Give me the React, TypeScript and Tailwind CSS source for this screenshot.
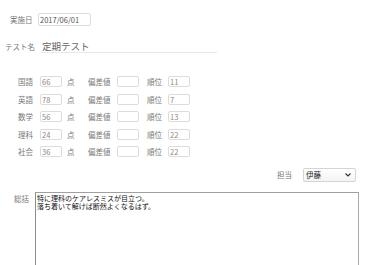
import React from 'react';

const scores = [
  { subject: '国語', score: '66', rank: '11' },
  { subject: '英語', score: '78', rank: '7' },
  { subject: '数学', score: '56', rank: '13' },
  { subject: '理科', score: '24', rank: '22' },
  { subject: '社会', score: '36', rank: '22' },
];

const font = { fontFamily: '"Noto Sans CJK JP", "Noto Sans", sans-serif' };

const App: React.FC = () => {
  return (
    <div
      className="w-[380px] h-[265px] overflow-hidden bg-white flex flex-col text-[#777]"
      style={font}
    >
      {/* 実施日 */}
      <div className="flex items-center mt-[13px] ml-[10px] h-[13px]">
        <span className="w-[28px] text-[7.5px] leading-none">実施日</span>
        <div className="w-[53px] h-[13px] border border-[#dcdcdc] rounded-[2px] flex items-center px-[1px] text-[7.5px] text-[#555]">
          2017/06/01
        </div>
      </div>

      {/* テスト名 */}
      <div className="flex items-center mt-[14px] ml-[5px] h-[13px]">
        <span className="w-[36px] text-[7.5px] leading-none">テスト名</span>
        <div className="w-[176px] h-[13px] border-b border-[#e8e8e8] flex items-center pl-[1px] text-[9.5px] text-[#666]">
          定期テスト
        </div>
      </div>

      {/* 科目 */}
      <div className="flex flex-col mt-[20px] ml-[18px]">
        {scores.map((s) => (
          <div key={s.subject} className="flex items-center h-[17.5px] text-[7.5px]">
            <span className="w-[22px]">{s.subject}</span>
            <div className="w-[22px] h-[11px] border border-[#dcdcdc] rounded-[2px] flex items-center px-[1px] text-[#8a8a8a]">
              {s.score}
            </div>
            <span className="ml-[5px] w-[21px]">点</span>
            <span className="w-[29px]">偏差値</span>
            <div className="w-[22px] h-[11px] border border-[#dcdcdc] rounded-[2px]" />
            <span className="ml-[8px] w-[21px]">順位</span>
            <div className="w-[22px] h-[11px] border border-[#dcdcdc] rounded-[2px] flex items-center px-[1px] text-[#8a8a8a]">
              {s.rank}
            </div>
          </div>
        ))}
      </div>

      {/* 担当 */}
      <div className="flex items-center justify-end mt-[7px] mr-[24px] h-[14px]">
        <span className="text-[7.5px] mr-[11px]">担当</span>
        <div className="w-[53px] h-[14px] border border-[#d4d4d4] rounded-[2px] bg-gradient-to-b from-white to-[#f4f4f4] flex items-center justify-between pl-[2px] pr-[4px] text-[7.5px] text-[#222]">
          <span>伊藤</span>
          <svg width="6" height="4" viewBox="0 0 6 4" fill="none">
            <path d="M0.5 0.5L3 3L5.5 0.5" stroke="#333" strokeWidth="1.1" />
          </svg>
        </div>
      </div>

      {/* 総括 */}
      <div className="flex items-start mt-[10px] ml-[14px]">
        <span className="w-[21px] text-[7.5px] mt-[1px]">総括</span>
        <div className="w-[324px] h-[90px] border border-[#a0a0a0] border-l-[#8c8c8c] border-r-[#a8a8a8] px-[1px] pt-[1px] text-[7px] leading-[8.5px] text-[#111]">
          <div>特に理科のケアレスミスが目立つ。</div>
          <div>落ち着いて解けば断然よくなるはず。</div>
        </div>
      </div>
    </div>
  );
};

export default App;
